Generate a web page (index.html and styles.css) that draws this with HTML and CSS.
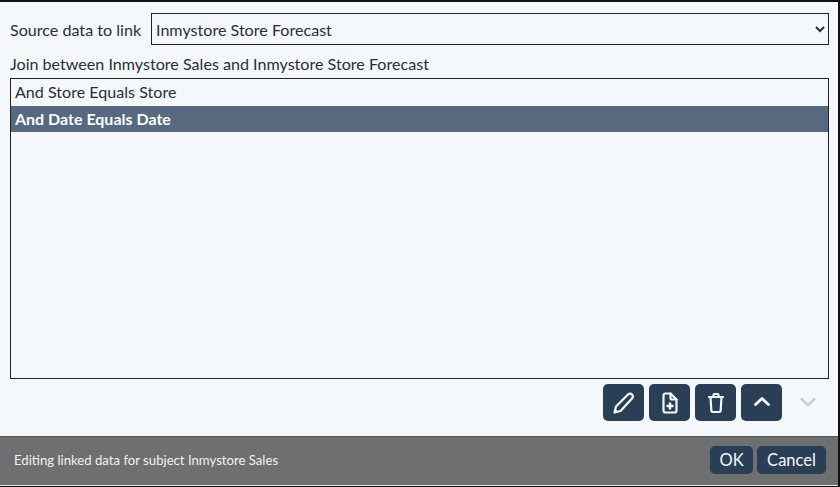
FILE: index.html
```html
<!DOCTYPE html>
<html>
<head>
    <title>Linked Data</title>
    <link rel="stylesheet" href="styles.css">
</head>
<body>
    <div class="dialog">
        <div class="content">
            <div class="source-row">
                <label for="source">Source data to link</label>
                <select id="source">
                    <option>Inmystore Store Forecast</option>
                </select>
            </div>
            <div class="join-label">Join between Inmystore Sales and Inmystore Store Forecast</div>
            <div class="join-list">
                <div class="join-item">And Store Equals Store</div>
                <div class="join-item selected">And Date Equals Date</div>
            </div>
            <div class="tools">
                <button class="tool" title="Edit">
                    <svg width="24" height="24" viewBox="0 0 24 24" fill="none" stroke="currentColor" stroke-width="2.2" stroke-linejoin="round" stroke-linecap="round">
                        <path d="M2.500 21.500l1.500-6L16 3.500c1.200-1.200 3-1.200 4 0s1.200 2.800 0 4L8.500 20z"/>
                        <path d="M2.500 21.500l.8-3.200 2.400 2.400z" fill="currentColor" stroke-width="1"/>
                    </svg>
                </button>
                <button class="tool" title="Add">
                    <svg width="24" height="24" viewBox="0 0 24 24" fill="none" stroke="currentColor" stroke-width="2.2" stroke-linejoin="round" stroke-linecap="round">
                        <path d="M7.500 2.500h5l6 6v11a2 2 0 0 1-2 2h-9a2 2 0 0 1-2-2v-15a2 2 0 0 1 2-2z"/>
                        <path d="M12.500 2.500v4.500a1.500 1.500 0 0 0 1.500 1.500h4.500"/>
                        <path d="M12 11.500v7M8.500 15h7" stroke-width="2.400" stroke-linecap="butt"/>
                    </svg>
                </button>
                <button class="tool" title="Delete">
                    <svg width="24" height="24" viewBox="0 0 24 24" fill="none" stroke="currentColor" stroke-width="2.2" stroke-linejoin="round" stroke-linecap="round">
                        <path d="M5 6h14"/>
                        <path d="M9.500 6V4a1 1 0 0 1 1-1h3a1 1 0 0 1 1 1v2"/>
                        <path d="M6.500 6l.8 13a2 2 0 0 0 2 2h5.400a2 2 0 0 0 2-2l.8-13"/>
                    </svg>
                </button>
                <button class="tool" title="Move up">
                    <svg width="24" height="24" viewBox="0 0 24 24" fill="none" stroke="currentColor" stroke-width="2.8" stroke-linejoin="round" stroke-linecap="round">
                        <path d="M5.500 13.500l6.500-6 6.500 6"/>
                    </svg>
                </button>
                <button class="tool disabled" title="Move down">
                    <svg width="24" height="24" viewBox="0 0 24 24" fill="none" stroke="currentColor" stroke-width="2.4" stroke-linejoin="round" stroke-linecap="round">
                        <path d="M5.500 8l6.500 6 6.500-6"/>
                    </svg>
                </button>
            </div>
        </div>
        <div class="footer">
            <span class="status">Editing linked data for subject Inmystore Sales</span>
            <div class="actions">
                <button class="action ok">OK</button>
                <button class="action cancel">Cancel</button>
            </div>
        </div>
    </div>
</body>
</html>
```

FILE: styles.css
```css
html, body {
  height: 100%;
}
body {
  margin: 0;
  background-color: #111;
  font-family: Lato, "Open Sans", sans-serif;
  font-size: 16.1px;
  color: #2b2f33;
}
.dialog {
  box-sizing: border-box;
  width: 838px;
  height: 484px;
  margin-top: 2px;
  padding-bottom: 1px;
  display: flex;
  flex-direction: column;
  background-color: #e4e6e8;
}
.content {
  flex: 1;
  display: flex;
  flex-direction: column;
  padding: 11px 9px 0 10px;
  background-color: #f4f8fc;
}
.source-row {
  display: flex;
  align-items: center;
  gap: 10px;
}
.source-row label {
  width: 131px;
  white-space: nowrap;
}
select {
  flex: 1;
  height: 32px;
  padding: 0;
  border: 1px solid #222;
  border-radius: 0;
  background-color: #f4f8fc;
  font-family: inherit;
  font-size: 16.1px;
  color: #2b2f33;
}
.join-label {
  margin-top: 9px;
  height: 24px;
  line-height: 20px;
}
.join-list {
  height: 299px;
  border: 1px solid #222;
  background-color: #f4f8fc;
}
.join-item {
  height: 27px;
  line-height: 25px;
  padding-left: 4px;
}
.join-item.selected {
  height: 26px;
  line-height: 26px;
  background-color: #56697e;
  color: #fff;
  font-size: 16px;
  font-weight: bold;
}
.tools {
  display: flex;
  justify-content: flex-end;
  gap: 5px;
  margin-top: 5px;
  padding-right: 1px;
}
.tool {
  width: 41px;
  height: 37px;
  padding: 0;
  display: flex;
  align-items: center;
  justify-content: center;
  border: none;
  border-radius: 5px;
  background-color: #2a3f55;
  color: #f4f8fc;
}
.tool.disabled {
  background: none;
  color: #c9cdd1;
}
.footer {
  height: 49px;
  box-sizing: border-box;
  display: flex;
  align-items: center;
  justify-content: space-between;
  padding: 0 12px 2px 14px;
  border-top: 1px solid #555;
  background-color: #6e6f6e;
}
.status {
  font-size: 13.15px;
  color: #f0f2f4;
}
.actions {
  display: flex;
  gap: 4px;
}
.action {
  height: 28px;
  padding: 0;
  border: none;
  border-radius: 5px;
  background-color: #2a3f55;
  color: #f4f8fc;
  font-family: inherit;
  font-size: 16.5px;
}
.ok {
  width: 43px;
}
.cancel {
  width: 69px;
}
```
